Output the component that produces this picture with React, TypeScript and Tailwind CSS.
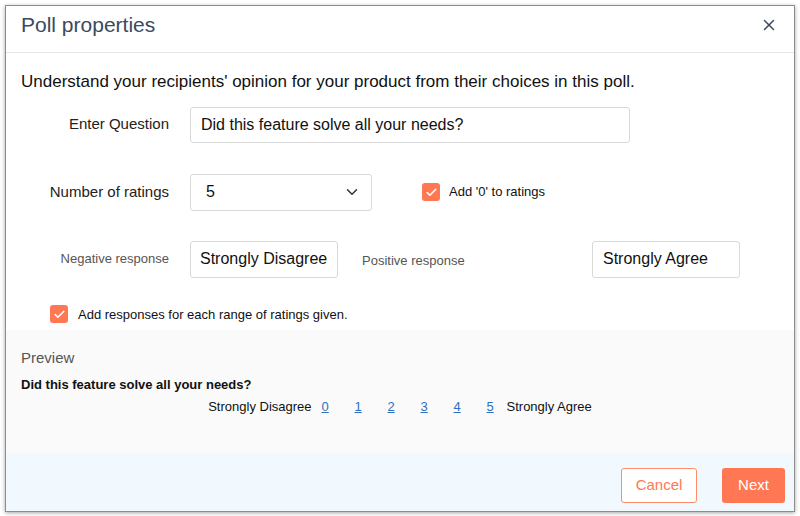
import { Check, ChevronDown, X } from "lucide-react"

const ratings = [0, 1, 2, 3, 4, 5]

function Checkbox() {
  return (
    <span className="flex h-[18px] w-[18px] shrink-0 items-center justify-center rounded-[3px] bg-[#ff7853]">
      <Check className="h-[13px] w-[13px] text-white" strokeWidth={3} />
    </span>
  )
}

export default function App() {
  return (
    <div className="h-[516px] w-[800px] bg-white p-[5px] font-['Liberation_Sans',Arial,sans-serif]">
      <div className="flex h-[507px] w-[790px] flex-col border border-[#8c8c8c] bg-white shadow-[0_1px_4px_rgba(0,0,0,0.35)]">
        {/* header */}
        <div className="flex h-[47px] shrink-0 items-center justify-between border-b border-[#e6e6e6] pb-[8px] pl-[15px] pr-[16px]">
          <h2 className="text-[21px] text-[#3b4a5e]">Poll properties</h2>
          <X className="h-[18px] w-[18px] text-[#3b4a5e]" strokeWidth={2} />
        </div>

        {/* form */}
        <div className="flex h-[277px] shrink-0 flex-col pl-[15px] pt-[16px]">
          <p className="text-[17px] text-[#111]">
            Understand your recipients' opinion for your product from their choices in this poll.
          </p>

          <div className="mt-[12px] flex items-center">
            <span className="w-[148px] text-right text-[15px] text-[#222]">Enter Question</span>
            <div className="ml-[21px] flex h-[36px] w-[440px] items-center rounded-[3px] border border-[#d9d9d9] px-[10px] text-[16px] text-[#111]">
              Did this feature solve all your needs?
            </div>
          </div>

          <div className="mt-[31px] flex items-center">
            <span className="w-[148px] text-right text-[15px] text-[#222]">Number of ratings</span>
            <div className="ml-[21px] flex h-[37px] w-[182px] items-center justify-between rounded-[3px] border border-[#d9d9d9] pl-[15px] pr-[10px] text-[16px] text-[#111]">
              <span>5</span>
              <ChevronDown className="h-[18px] w-[18px] text-[#333]" strokeWidth={2} />
            </div>
            <div className="ml-[50px] flex items-center gap-[9px] text-[13px] text-[#111]">
              <Checkbox />
              <span>Add '0' to ratings</span>
            </div>
          </div>

          <div className="mt-[30px] flex items-center">
            <span className="w-[148px] text-right text-[13px] text-[#555]">Negative response</span>
            <div className="ml-[21px] flex h-[37px] w-[148px] items-center whitespace-nowrap rounded-[3px] border border-[#d9d9d9] px-[9px] text-[16px] text-[#111]">
              Strongly Disagree
            </div>
            <span className="ml-[24px] mt-[3px] w-[230px] text-[13px] text-[#555]">Positive response</span>
            <div className="flex h-[37px] w-[148px] items-center whitespace-nowrap rounded-[3px] border border-[#d9d9d9] px-[10px] text-[16px] text-[#111]">
              Strongly Agree
            </div>
          </div>

          <div className="mt-[27px] flex items-center gap-[10px] pl-[29px] text-[13px] text-[#111]">
            <Checkbox />
            <span>Add responses for each range of ratings given.</span>
          </div>
        </div>

        {/* preview */}
        <div className="flex h-[123px] shrink-0 flex-col bg-[#fafafa] pl-[15px] pt-[17px]">
          <span className="text-[15px] text-[#555]">Preview</span>
          <span className="mt-[5px] text-[13px] font-bold text-[#111]">Did this feature solve all your needs?</span>
          <div className="mt-[3px] flex items-center justify-center pr-[15px] text-[13px] text-[#111]">
            <span>Strongly Disagree</span>
            <div className="ml-[10px] flex gap-[25px]">
              {ratings.map((r) => (
                <a key={r} className="w-[8px] text-[#2f6fbf] underline">
                  {r}
                </a>
              ))}
            </div>
            <span className="ml-[12px]">Strongly Agree</span>
          </div>
        </div>

        {/* footer */}
        <div className="flex flex-1 items-center justify-end gap-[25px] bg-[#f1f8fe] pr-[9px] pt-[6px]">
          <button className="h-[35px] w-[76px] rounded-[3px] border border-[#ff8c6b] bg-white text-[15px] text-[#ff7853]">
            Cancel
          </button>
          <button className="h-[35px] w-[63px] rounded-[3px] bg-[#ff7853] text-[15px] text-white">Next</button>
        </div>
      </div>
    </div>
  )
}
